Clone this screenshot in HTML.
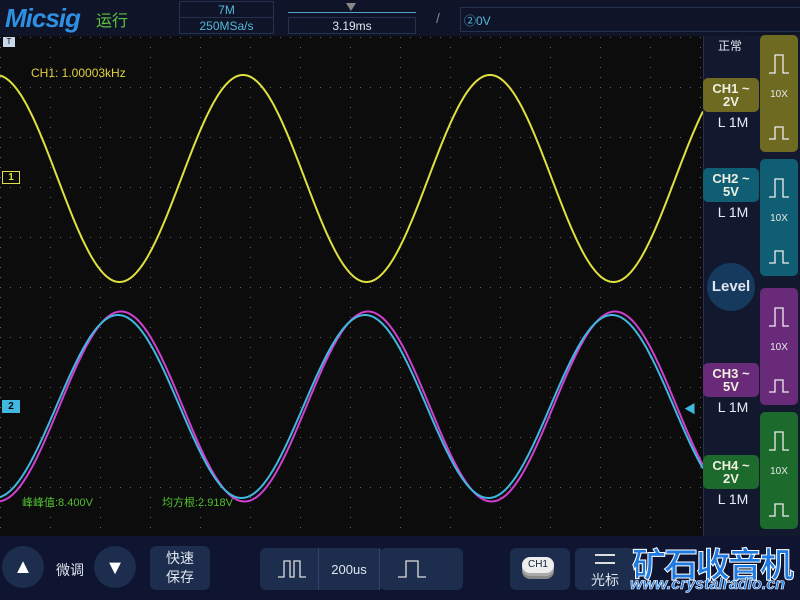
<!DOCTYPE html><html><head><meta charset="utf-8"><style>
*{margin:0;padding:0;box-sizing:border-box}
body{width:800px;height:600px;background:#12182e;font-family:"Liberation Sans","Noto Sans CJK SC",sans-serif;position:relative;overflow:hidden;color:#dfe6f0}
.a{position:absolute}
.top{left:0;top:0;width:800px;height:36px;background:#0f1429}
.box{border:1px solid #25324f}
.chb{border-radius:5px;font-weight:bold;text-align:center;font-size:13px;line-height:13px;padding-top:4px;color:#f0f0e0}
.lm{font-size:14px;color:#e6ecf5;width:50px;text-align:center}
.pr{border-radius:5px;width:38px}
.pr .x{position:absolute;left:0;width:38px;text-align:center;font-size:10px;color:#e8e8e8}
.btn{background:#1c2d4d;border-radius:6px}
</style></head><body>
<div class="a top"></div>
<div class="a" style="left:5px;top:3px;font:italic bold 26px 'Liberation Sans',sans-serif;color:#2f8fe0;letter-spacing:-1px">Micsig</div>
<div class="a" style="left:96px;top:7px;font-size:16px;color:#5fc43a">运行</div>
<div class="a box" style="left:179px;top:1px;width:95px;height:33px"></div>
<div class="a" style="left:179px;top:17px;width:95px;border-top:1px solid #25324f"></div>
<div class="a" style="left:179px;top:3px;width:95px;text-align:center;font-size:12px;color:#55b8d8">7M</div>
<div class="a" style="left:179px;top:19px;width:95px;text-align:center;font-size:12px;color:#55b8d8">250MSa/s</div>
<div class="a" style="left:288px;top:12px;width:128px;border-top:1px solid #4fa4cc"></div>
<div class="a box" style="left:288px;top:17px;width:128px;height:17px;text-align:center;font-size:12px;color:#e0e6f0;line-height:16px">3.19ms</div>
<div class="a" style="left:346px;top:3px;width:0;height:0;border-left:5px solid transparent;border-right:5px solid transparent;border-top:8px solid #888"></div>
<div class="a" style="left:436px;top:10px;font-size:14px;color:#888">/</div>
<div class="a box" style="left:460px;top:7px;width:345px;height:25px;font-size:12px;color:#55b8d8;padding:4px 3px">②0V</div>
<svg class="a" style="left:0;top:36px" width="703" height="501" id="sc">
<rect width="703" height="501" fill="#0c0c0c"/>
<g id="g"></g>
<path id="m" fill="none" stroke="#d040d0" stroke-width="2"/>
<path id="c2" fill="none" stroke="#40b8e0" stroke-width="2"/>
<path id="c1" fill="none" stroke="#e0e040" stroke-width="2"/>
</svg>
<div class="a" style="left:3px;top:37px;width:12px;height:10px;background:#c8d8e8;font-size:8px;color:#000;text-align:center;line-height:10px">T</div>
<div class="a" style="left:31px;top:66px;font-size:12px;color:#e0d040">CH1: 1.00003kHz</div>
<div class="a" style="left:2px;top:171px;width:18px;height:13px;border:1px solid #e0e040;color:#e0e040;font-size:10px;font-weight:bold;text-align:center;line-height:11px;background:#0c0c0c">1</div>
<div class="a" style="left:2px;top:400px;width:18px;height:13px;background:#40b8e0;color:#000;font-size:10px;font-weight:bold;text-align:center;line-height:13px">2</div>
<div class="a" style="left:684px;top:400px;color:#40b8e0;font-size:12px">◀</div>
<div class="a" style="left:22px;top:494px;font-size:11px;color:#50c030">峰峰值:8.400V</div>
<div class="a" style="left:162px;top:494px;font-size:11px;color:#50c030">均方根:2.918V</div>
<div class="a" style="left:703px;top:36px;width:1px;height:500px;background:#25324f"></div>
<div class="a" style="left:718px;top:37px;font-size:12px">正常</div>
<div class="a chb" style="left:703px;top:78px;width:56px;height:34px;background:#6e6a22">CH1 ~<br>2V</div>
<div class="a lm" style="left:708px;top:114px">L 1M</div>
<div class="a chb" style="left:703px;top:168px;width:56px;height:34px;background:#0f5e74">CH2 ~<br>5V</div>
<div class="a lm" style="left:708px;top:204px">L 1M</div>
<div class="a chb" style="left:703px;top:363px;width:56px;height:34px;background:#6a2a7a">CH3 ~<br>5V</div>
<div class="a lm" style="left:708px;top:399px">L 1M</div>
<div class="a chb" style="left:703px;top:455px;width:56px;height:34px;background:#1c6a2c">CH4 ~<br>2V</div>
<div class="a lm" style="left:708px;top:491px">L 1M</div>
<div class="a" style="left:707px;top:263px;width:48px;height:48px;border-radius:50%;background:#163a5e;text-align:center;line-height:48px;font-size:15px;font-weight:bold">Level</div>
<div class="a pr" style="left:760px;top:35px;height:117px;background:#6e6a22"><div class="x" style="top:54px">10X</div></div>
<div class="a pr" style="left:760px;top:159px;height:117px;background:#0f5e74"><div class="x" style="top:54px">10X</div></div>
<div class="a pr" style="left:760px;top:288px;height:117px;background:#6a2a7a"><div class="x" style="top:54px">10X</div></div>
<div class="a pr" style="left:760px;top:412px;height:117px;background:#1c6a2c"><div class="x" style="top:54px">10X</div></div>
<svg class="a" style="left:760px;top:35px" width="38" height="500" fill="none" stroke="#eee" stroke-width="1.3">
<path d="M9 38h6v-18h8v18h6M9 104h6v-12h8v12h6"/>
<path d="M9 162h6v-18h8v18h6M9 228h6v-12h8v12h6"/>
<path d="M9 291h6v-18h8v18h6M9 357h6v-12h8v12h6"/>
<path d="M9 415h6v-18h8v18h6M9 481h6v-12h8v12h6"/>
</svg>
<div class="a" style="left:0;top:536px;width:800px;height:64px;background:#0f1530"></div>
<div class="a" style="left:2px;top:546px;width:42px;height:42px;border-radius:50%;background:#1c2d4d;color:#fff;text-align:center;line-height:42px;font-size:20px">▲</div>
<div class="a" style="left:56px;top:560px;font-size:14px">微调</div>
<div class="a" style="left:94px;top:546px;width:42px;height:42px;border-radius:50%;background:#1c2d4d;color:#fff;text-align:center;line-height:44px;font-size:20px">▼</div>
<div class="a btn" style="left:150px;top:546px;width:60px;height:44px;text-align:center;font-size:14px;line-height:19px;padding-top:3px">快速<br>保存</div>
<div class="a btn" style="left:260px;top:548px;width:123px;height:42px"></div>
<div class="a" style="left:318px;top:548px;width:1px;height:42px;background:#2e4468"></div>
<div class="a" style="left:379px;top:548px;width:1px;height:42px;background:#2e4468"></div>
<div class="a btn" style="left:380px;top:548px;width:83px;height:42px"></div>
<div class="a" style="left:319px;top:562px;width:60px;text-align:center;font-size:13px">200us</div>
<svg class="a" style="left:260px;top:548px" width="203" height="42" fill="none" stroke="#ddd" stroke-width="1.3"><path d="M18 29h6v-16h6v16h4v-16h6v16h6M138 29h8v-16h12v16h8"/></svg>
<div class="a btn" style="left:510px;top:548px;width:60px;height:42px"></div>
<div class="a" style="left:522px;top:557px;width:32px;height:16px;border-radius:8px;background:#eee;color:#123;font-size:10px;text-align:center;line-height:16px;box-shadow:0 3px 0 #aaa,0 6px 0 #888">CH1</div>
<div class="a btn" style="left:575px;top:548px;width:60px;height:42px;text-align:center;font-size:14px;padding-top:22px">光标</div>
<div class="a" style="left:595px;top:554px;width:20px;height:10px;border-top:2px solid #ddd;border-bottom:2px solid #ddd"></div>
<div class="a" style="left:632px;top:538px;font:bold 34px 'Liberation Sans','Noto Sans CJK SC',sans-serif;color:#1e7ae0;letter-spacing:-2px;-webkit-text-stroke:1px #fff">矿石收音机</div>
<div class="a" style="left:630px;top:576px;font:bold italic 16px 'Liberation Sans',sans-serif;color:#1e7ae0;-webkit-text-stroke:.6px #fff">www.crystalradio.cn</div>
<script>
var g=document.getElementById('g'),s='';
for(var x=0;x<=700;x+=10)for(var y=1;y<501;y+=50){s+='<rect x="'+x+'" y="'+y+'" width="1" height="1" fill="#666"/>';}
for(var y=1;y<501;y+=10)for(var x=0;x<=700;x+=50){s+='<rect x="'+x+'" y="'+y+'" width="1" height="1" fill="#666"/>';}
g.innerHTML=s;
function p(f){var d='';for(var x=0;x<=703;x++){d+=(x?'L':'M')+x+' '+f(x).toFixed(1);}return d;}
var T=247,P=2*Math.PI;
document.getElementById('c1').setAttribute('d',p(function(x){return 142.5-103.5*Math.cos(P*(x-243)/T);}));
document.getElementById('c2').setAttribute('d',p(function(x){return 370.5-91.5*Math.cos(P*(x-118)/T);}));
document.getElementById('m').setAttribute('d',p(function(x){return 370.5-95*Math.cos(P*(x-121)/T);}));
</script>
</body></html>
